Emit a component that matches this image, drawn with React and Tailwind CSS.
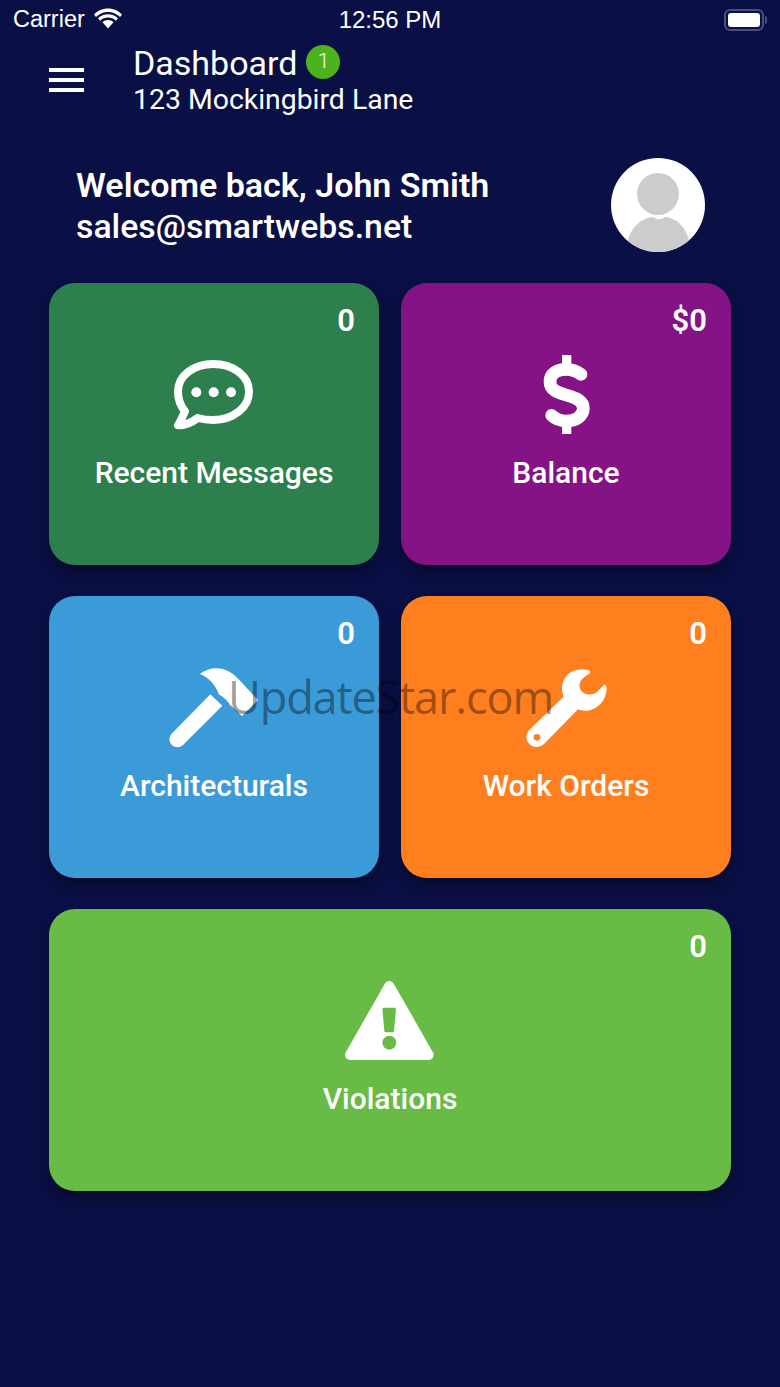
import React from 'react';

const ChatIcon = () => (
  <svg width="130" height="110" viewBox="0 0 390 330" fill="none" className="ml-[2px] mt-[4px]">
    <path d="M105 214C95 235 90 248 84 256C105 256 125 248 143 234C158 238 175 240 190 240C250 240 297 202 297 155C297 108 250 72 190 72C130 72 84 108 84 155C84 178 92 198 105 214Z" stroke="white" strokeWidth="24" strokeLinejoin="round" />
    <circle cx="139" cy="157" r="15" fill="white" />
    <circle cx="191" cy="157" r="15" fill="white" />
    <circle cx="243" cy="157" r="15" fill="white" />
  </svg>
);

const DollarIcon = () => (
  <svg width="110" height="110" viewBox="0 0 330 330" fill="none" className="mt-[4px]">
    <path d="M155 47h24v40h-24zM155 245h24v35h-24z" fill="white" stroke="white" strokeWidth="4" strokeLinejoin="round" />
    <path d="M210 103C195 92 180 88 165 88C135 88 117 103 117 125C117 150 140 158 165 165C195 173 217 182 217 205C217 228 195 243 165 243C148 243 134 237 122 226" stroke="white" strokeWidth="38" strokeLinecap="round" />
  </svg>
);

const HammerIcon = () => (
  <svg width="110" height="95" viewBox="0 0 330 285" fill="white" className="ml-[2px] mt-[3px]">
    <path d="M35 221L69 255L187 137L151 103Z" />
    <circle cx="52" cy="238" r="24" />
    <path d="M120 42C135 30 155 24 171 25C190 26 205 32 219 42C240 60 265 90 294 120L246 168L208 133C205 122 190 112 178 104C168 85 160 60 120 42Z" />
  </svg>
);

const WrenchIcon = () => (
  <svg width="100" height="95" viewBox="0 0 300 285" fill="white" className="mt-[3px]">
    <path d="M222 34C218 28 200 26 180 30C155 36 138 60 138 85C138 95 140 103 143 110L42 208C28 222 28 240 40 252C52 264 72 264 84 252L186 148C195 152 205 153 215 152C245 148 270 122 272 88C272 80 268 72 264 74L243 96C235 104 218 106 205 100C192 92 188 80 192 68C196 58 205 50 222 40Z" />
    <circle cx="63" cy="232" r="10" fill="#FF7F1F" />
  </svg>
);

const WarningIcon = () => (
  <svg width="120" height="100" viewBox="0 0 360 300" fill="white" className="mt-[2px]">
    <path d="M178 48L60 255H296Z" stroke="white" strokeWidth="30" strokeLinejoin="round" />
    <path d="M157 118C157 115 159 113 162 113H193C196 113 198 115 198 118L192 182C192 185 190 187 187 187H168C165 187 163 185 163 182Z" fill="#68BC45" />
    <circle cx="178" cy="218" r="21" fill="#68BC45" />
  </svg>
);

const AvatarIcon = () => (
  <svg width="94" height="94" viewBox="0 0 94 94">
    <defs>
      <clipPath id="avatar-clip"><circle cx="47" cy="47" r="47" /></clipPath>
    </defs>
    <circle cx="47" cy="47" r="47" fill="white" />
    <g clipPath="url(#avatar-clip)" fill="#CCCCCC">
      <circle cx="47" cy="36" r="21" />
      <path d="M16 94V88C18 70 30 60 42 59C46 62 50 62 54 59C66 60 77 70 79 88V94Z" />
    </g>
  </svg>
);

const Card = ({ color, count, label, icon, className }) => (
  <div className={`relative h-[282px] rounded-[26px] shadow-[0_8px_14px_rgba(0,0,0,0.35)] ${color} ${className || ''}`}>
    <div className="absolute right-6 top-[19px] text-[31px] leading-[38px] font-semibold text-white">{count}</div>
    <div className="flex h-[100px] mt-[60px] items-center justify-center">{icon}</div>
    <div className="mt-[13px] text-center text-[30px] leading-[34px] font-medium text-white">{label}</div>
  </div>
);

export default function App() {
  return (
    <div className="relative min-h-[1387px] overflow-hidden bg-[#0A0F45] font-['Roboto',sans-serif] text-white">
      {/* Status bar */}
      <div className="flex h-[40px] items-center justify-between px-[13px]">
        <div className="flex w-[200px] items-center gap-[9px]">
          <span className="text-[23.500px] leading-none font-['Liberation_Sans',sans-serif]">Carrier</span>
          <svg width="28" height="21" viewBox="0 0 28 21" fill="white" className="-mt-1">
            <path d="M14 4C19 4 23 6 26 9L28 6.500C24.500 2.800 19.500 0.500 14 0.500C8.500 0.500 3.500 2.800 0 6.500L2 9C5 6 9 4 14 4Z" />
            <path d="M14 9.500C17 9.500 19.700 10.700 21.800 12.700L24 10.300C21.300 7.700 17.800 6.200 14 6.200C10.200 6.200 6.700 7.700 4 10.300L6.200 12.700C8.300 10.700 11 9.500 14 9.500Z" />
            <path d="M14 12C11.900 12 10 12.800 8.500 14.200L14 20.500L19.500 14.200C18 12.800 16.100 12 14 12Z" />
          </svg>
        </div>
        <span className="text-[24px] leading-none font-['Liberation_Sans',sans-serif]">12:56 PM</span>
        <div className="flex w-[200px] items-center justify-end">
          <div className="flex h-[22px] w-[40px] items-center rounded-[6px] border-2 border-[#4C5080] p-[2px]">
            <div className="h-full w-full rounded-[3px] bg-white" />
          </div>
          <div className="ml-[1px] h-[8px] w-[2px] rounded-r-full bg-[#4C5080]" />
        </div>
      </div>

      {/* Header */}
      <div className="flex h-[76px] items-center pl-[49px] pt-[2px]">
        <div className="flex w-[84px] flex-col gap-[6px] pt-[2px]">
          <div className="h-[4px] w-[35px] bg-white" />
          <div className="h-[4px] w-[35px] bg-white" />
          <div className="h-[4px] w-[35px] bg-white" />
        </div>
        <div className="pt-[1px]">
          <div className="flex items-center gap-[9px]">
            <span className="text-[34px] leading-[40px] font-normal">Dashboard</span>
            <span className="flex h-[34px] w-[34px] -translate-y-px items-center justify-center rounded-full bg-[#4CB31E] text-[21px] font-light">1</span>
          </div>
          <div className="text-[28.400px] leading-[34px] font-normal">123 Mockingbird Lane</div>
        </div>
      </div>

      {/* Welcome */}
      <div className="mt-[42px] flex items-center justify-between pl-[76px] pr-[75px]">
        <div className="pt-[2px] text-[34px] leading-[41px]">
          <div className="font-semibold">Welcome back, John Smith</div>
          <div className="text-[33.800px] font-medium">sales@smartwebs.net</div>
        </div>
        <AvatarIcon />
      </div>

      {/* Tiles */}
      <div className="mt-[31px] grid grid-cols-2 gap-x-[22px] gap-y-[31px] px-[49px]">
        <Card color="bg-[#2D7F4E]" count="0" label="Recent Messages" icon={<ChatIcon />} />
        <Card color="bg-[#851385]" count="$0" label="Balance" icon={<DollarIcon />} />
        <Card color="bg-[#3A9BD8]" count="0" label="Architecturals" icon={<HammerIcon />} />
        <Card color="bg-[#FF7F1F]" count="0" label="Work Orders" icon={<WrenchIcon />} />
        <Card color="bg-[#68BC45]" count="0" label="Violations" icon={<WarningIcon />} className="col-span-2" />
      </div>

      {/* Watermark */}
      <div className="absolute left-[228px] top-[667px] text-[45px] leading-[60px] tracking-[-1.100px] font-['Open_Sans',sans-serif] text-black/40">UpdateStar.com</div>
    </div>
  );
}
